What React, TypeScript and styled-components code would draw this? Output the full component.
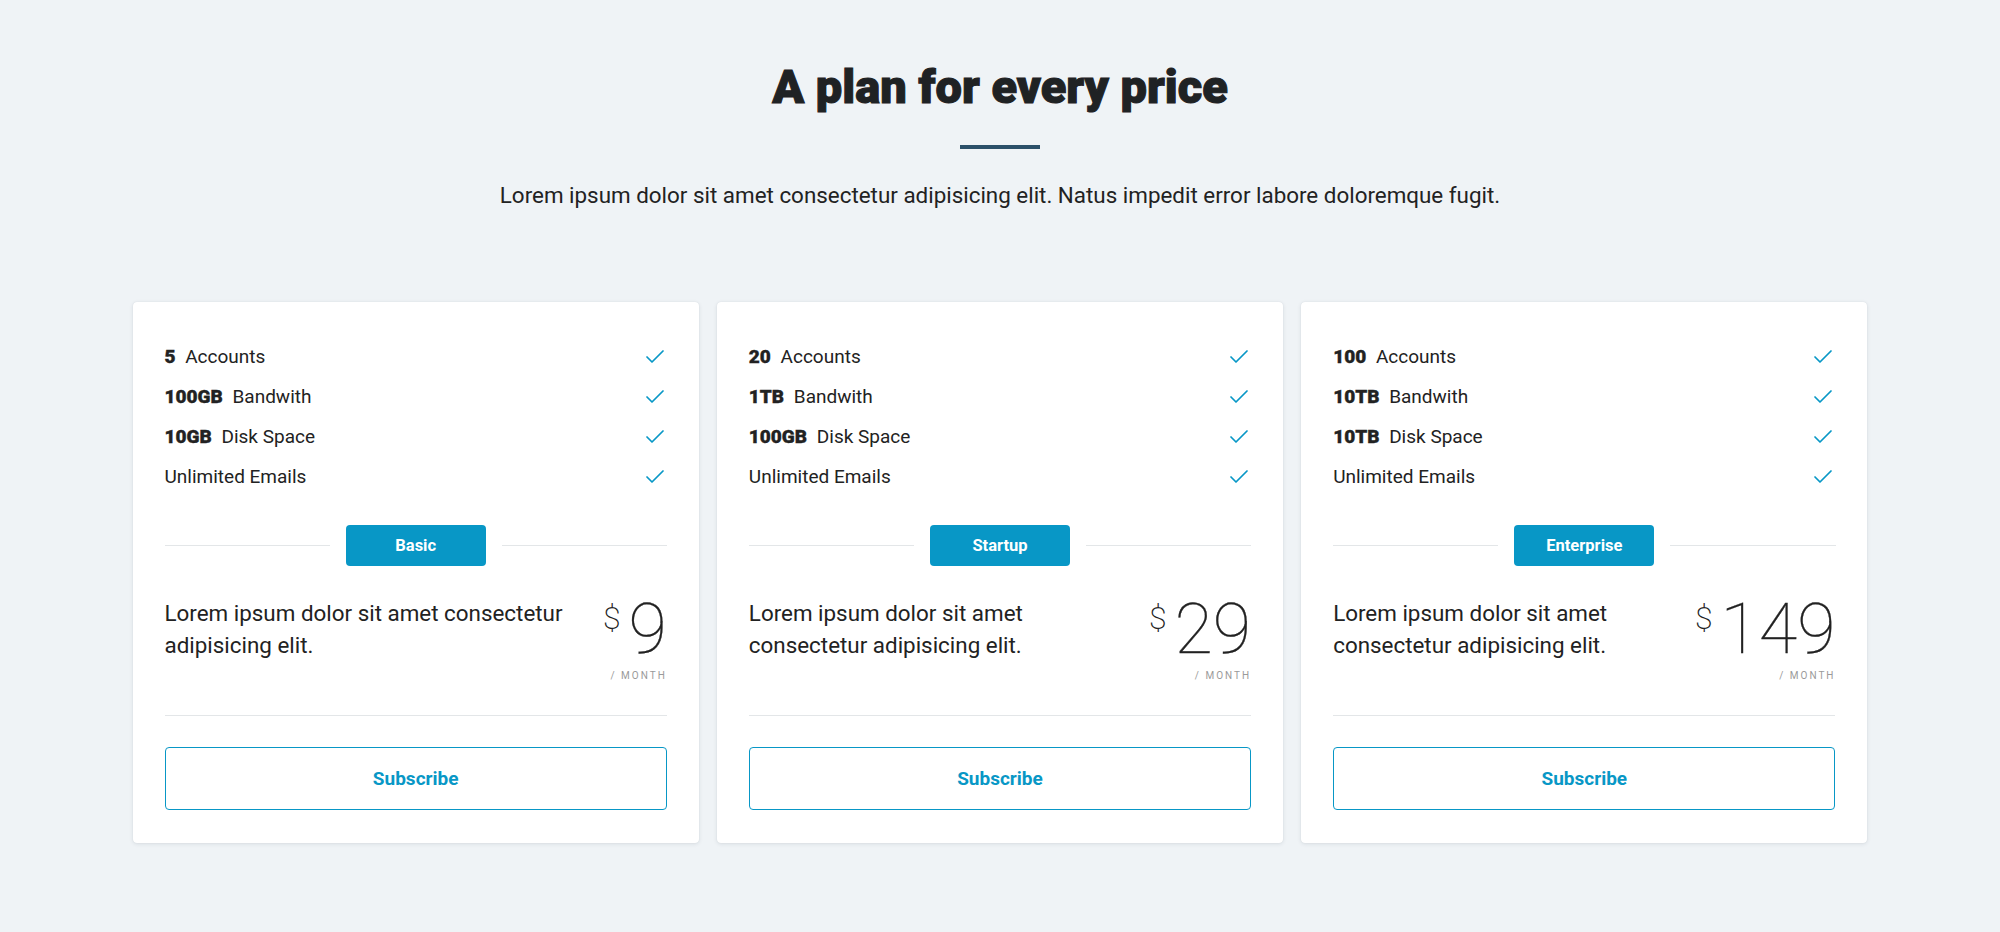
import React from "react";
import styled, { createGlobalStyle } from "styled-components";
import { Check } from "lucide-react";

const Global = createGlobalStyle`
  html, body { margin: 0; padding: 0; }
  body {
    background: #eff3f6;
    font-family: Roboto, "Noto Sans", "Liberation Sans", sans-serif;
    color: #212121;
    -webkit-font-smoothing: antialiased;
  }
  * { box-sizing: border-box; }
`;

const TEAL = "#0897c6";

const Section = styled.section`
  padding: 56px 0 60px;
  display: flex;
  flex-direction: column;
  align-items: center;
`;

const Title = styled.h1`
  margin: 0;
  font-size: 47px;
  line-height: 62px;
  font-weight: 900;
  color: #1f2224;
  -webkit-text-stroke: 1.1px #1f2224;
`;

const Bar = styled.div`
  width: 80px;
  height: 4px;
  background: #2b5069;
  margin-top: 27px;
`;

const Subtitle = styled.p`
  margin: 30px 0 0;
  font-size: 22.4px;
  line-height: 32px;
  color: #222;
`;

const Grid = styled.div`
  margin-top: 91px;
  width: 1735px;
  display: grid;
  grid-template-columns: repeat(3, 1fr);
  gap: 18px;
`;

const Card = styled.div`
  background: #fff;
  border-radius: 4px;
  box-shadow: 0 1px 4px rgba(20, 40, 60, 0.1), 0 0 1px rgba(20, 40, 60, 0.12);
  padding: 34px 32px 33px;
  display: flex;
  flex-direction: column;
`;

const Features = styled.ul`
  list-style: none;
  margin: 0;
  padding: 0;
`;

const Feature = styled.li`
  display: flex;
  align-items: center;
  justify-content: space-between;
  height: 40px;
  font-size: 19px;
  color: #222;
`;

const Strong = styled.strong`
  font-weight: 900;
  margin-right: 5px;
  -webkit-text-stroke: 0.35px #222;
`;

const CheckIcon = styled(Check)`
  color: ${TEAL};
  flex-shrink: 0;
  margin-top: 2px;
`;

const LabelRow = styled.div`
  margin-top: 29px;
  display: flex;
  align-items: center;
  gap: 16px;
`;

const Rule = styled.div`
  flex: 1;
  height: 1px;
  background: #e3e6e8;
`;

const Badge = styled.div`
  width: 140px;
  height: 41px;
  border-radius: 4px;
  background: ${TEAL};
  color: #fff;
  font-size: 16.5px;
  font-weight: 700;
  display: flex;
  align-items: center;
  justify-content: center;
`;

const InfoRow = styled.div`
  margin-top: 28px;
  display: flex;
  justify-content: space-between;
  align-items: flex-start;
  gap: 24px;
`;

const Description = styled.p`
  margin: 3px 0 0;
  flex: 1;
  font-size: 22.4px;
  line-height: 32px;
  color: #222;
`;

const PriceBlock = styled.div`
  display: flex;
  flex-direction: column;
  align-items: flex-end;
  flex-shrink: 0;
`;

const PriceLine = styled.div`
  display: flex;
  align-items: flex-start;
  color: #222;
`;

const Currency = styled.span`
  font-size: 32px;
  line-height: 40px;
  font-weight: 200;
  margin-right: 8px;
  margin-top: 4px;
`;

const Amount = styled.span`
  font-size: 70px;
  line-height: 70px;
  font-weight: 100;
  -webkit-text-stroke: 0.3px #222;
`;

const Period = styled.span`
  margin-top: 6px;
  font-size: 10px;
  letter-spacing: 2px;
  color: #9a9a9a;
  text-transform: uppercase;
`;

const BottomRule = styled.div`
  margin-top: 34px;
  height: 1px;
  background: #e3e6e8;
`;

const Subscribe = styled.button`
  margin-top: 31px;
  height: 63px;
  width: 100%;
  border: 1px solid ${TEAL};
  border-radius: 4px;
  background: #fff;
  color: ${TEAL};
  font-family: inherit;
  font-size: 19px;
  font-weight: 700;
  cursor: pointer;
`;

type Plan = {
  name: string;
  accounts: string;
  bandwidth: string;
  disk: string;
  price: string;
};

const plans: Plan[] = [
  { name: "Basic", accounts: "5", bandwidth: "100GB", disk: "10GB", price: "9" },
  { name: "Startup", accounts: "20", bandwidth: "1TB", disk: "100GB", price: "29" },
  { name: "Enterprise", accounts: "100", bandwidth: "10TB", disk: "10TB", price: "149" },
];

function PlanCard({ plan }: { plan: Plan }) {
  return (
    <Card>
      <Features>
        <Feature>
          <span>
            <Strong>{plan.accounts}</Strong> Accounts
          </span>
          <CheckIcon size={24} strokeWidth={1.75} />
        </Feature>
        <Feature>
          <span>
            <Strong>{plan.bandwidth}</Strong> Bandwith
          </span>
          <CheckIcon size={24} strokeWidth={1.75} />
        </Feature>
        <Feature>
          <span>
            <Strong>{plan.disk}</Strong> Disk Space
          </span>
          <CheckIcon size={24} strokeWidth={1.75} />
        </Feature>
        <Feature>
          <span>Unlimited Emails</span>
          <CheckIcon size={24} strokeWidth={1.75} />
        </Feature>
      </Features>
      <LabelRow>
        <Rule />
        <Badge>{plan.name}</Badge>
        <Rule />
      </LabelRow>
      <InfoRow>
        <Description>Lorem ipsum dolor sit amet consectetur adipisicing elit.</Description>
        <PriceBlock>
          <PriceLine>
            <Currency>$</Currency>
            <Amount>{plan.price}</Amount>
          </PriceLine>
          <Period>/ month</Period>
        </PriceBlock>
      </InfoRow>
      <BottomRule />
      <Subscribe>Subscribe</Subscribe>
    </Card>
  );
}

export default function App() {
  return (
    <>
      <Global />
      <Section>
        <Title>A plan for every price</Title>
        <Bar />
        <Subtitle>
          Lorem ipsum dolor sit amet consectetur adipisicing elit. Natus impedit error labore doloremque fugit.
        </Subtitle>
        <Grid>
          {plans.map((p) => (
            <PlanCard key={p.name} plan={p} />
          ))}
        </Grid>
      </Section>
    </>
  );
}
